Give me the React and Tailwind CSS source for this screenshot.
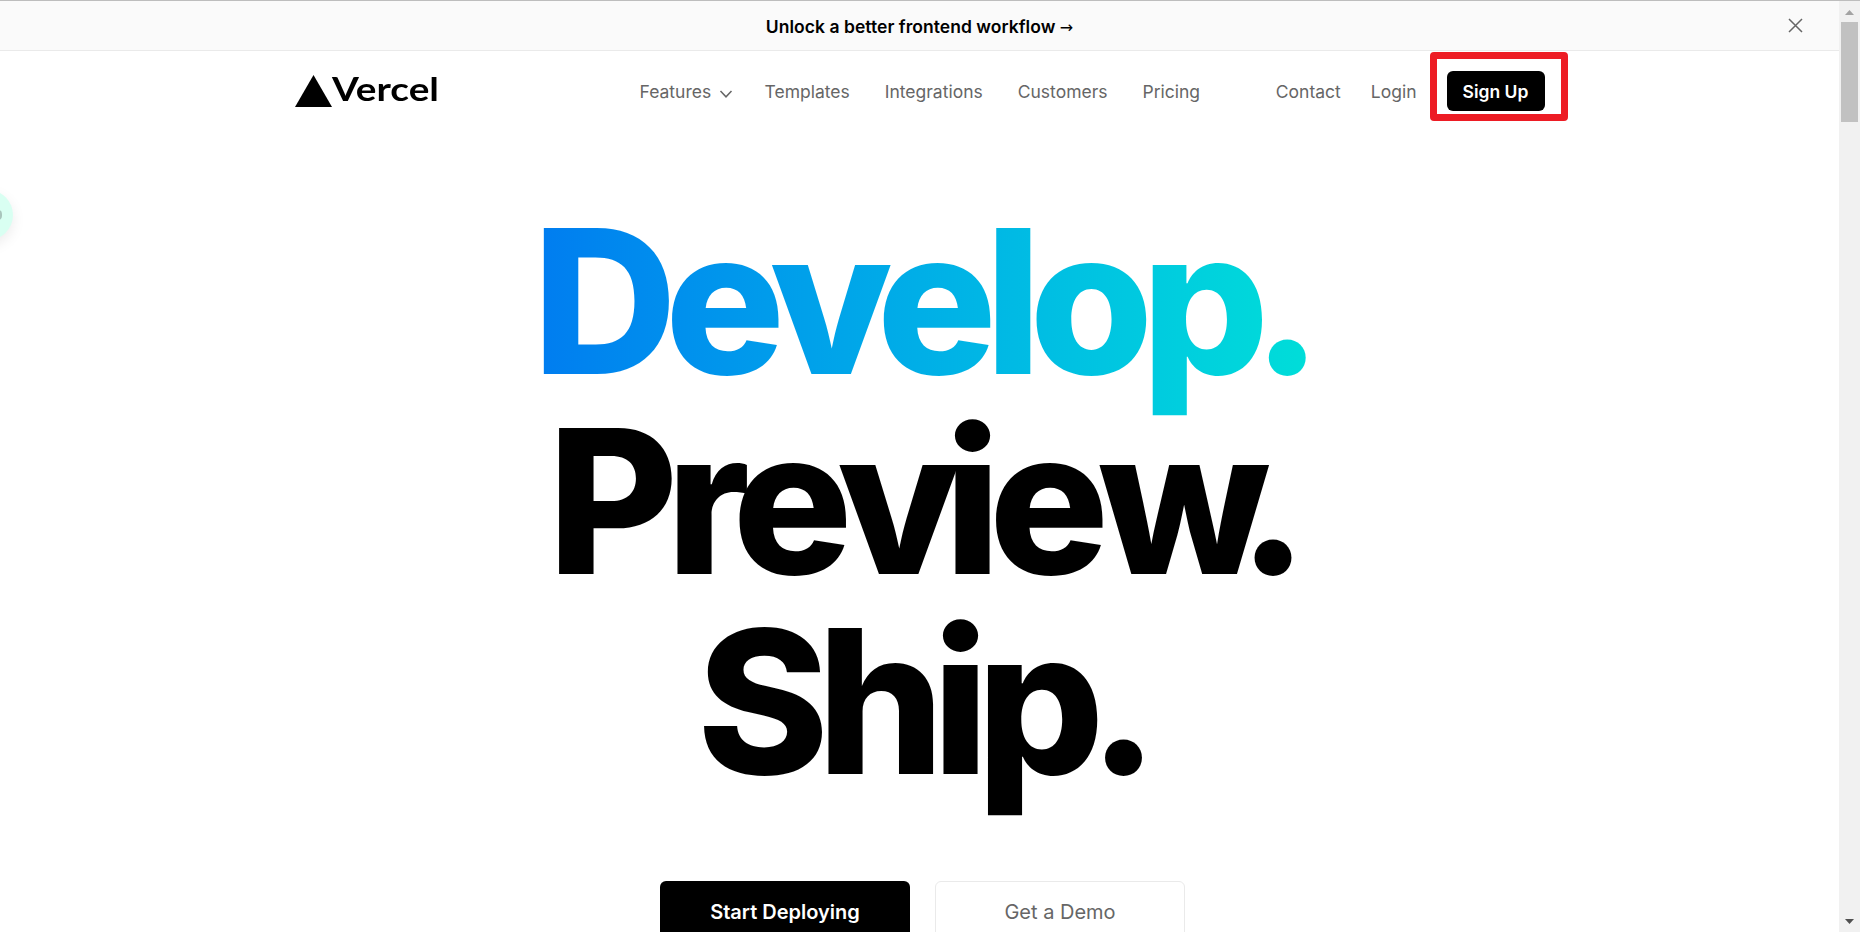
function Banner() {
  return (
    <div className="flex h-[51px] shrink-0 items-center border-t border-b border-t-[#bdbdbd] border-b-[#eaeaea] bg-[#fafafa]">
      <div className="w-[65px]" />
      <a className="flex-1 pt-[3px] text-center text-[17.5px] font-semibold leading-[26px] tracking-[0.04px] text-black">
        Unlock a better frontend workflow <span className="text-[16px] font-normal leading-[20px] tracking-normal font-[DejaVu_Sans,sans-serif]">→</span>
      </a>
      <div className="flex w-[65px] justify-center pr-[22px]">
        <svg width="15" height="15" viewBox="0 0 15 15" fill="none" stroke="#666" strokeWidth="1.5">
          <path d="M1 1l13 13M14 1L1 14" />
        </svg>
      </div>
    </div>
  );
}

function Logo() {
  return (
    <div className="flex h-8 w-[345px] items-start">
      <svg width="37" height="32" viewBox="0 0 37 32">
        <path d="M18.500 0L37 32H0z" fill="#000" />
      </svg>
      <span className="-mt-[2px] origin-left scale-x-[1.21] text-[32px] font-bold leading-[32px] text-black font-[Lato,sans-serif]">
        Vercel
      </span>
    </div>
  );
}

function Nav() {
  return (
    <header className="mx-auto flex h-[80px] w-[1250px] shrink-0 items-center text-[17.5px] leading-[26px] text-[#666]">
      <Logo />
      <nav className="flex gap-[35px] pt-[2px]">
        <a className="flex w-[90px] items-center gap-[8px]">
          Features
          <svg width="14" height="10" viewBox="0 0 14 10" fill="none" stroke="#666" strokeWidth="1.5" className="mt-[3px] shrink-0">
            <path d="M1.500 2L7 7.800L12.500 2" />
          </svg>
        </a>
        <a>Templates</a>
        <a>Integrations</a>
        <a>Customers</a>
        <a>Pricing</a>
      </nav>
      <div className="ml-auto flex items-center">
        <a className="mr-[30px] pt-[2px]">Contact</a>
        <a className="mr-[30px] pt-[2px]">Login</a>
        <span className="relative flex h-10 w-[98px] items-center justify-center rounded-[6px] bg-black pt-[2px] font-semibold text-white">
          Sign Up
          <span className="absolute -left-[17px] -top-[19px] h-[69px] w-[138px] rounded-[4px] border-[7px] border-[#ed1c24]" />
        </span>
      </div>
    </header>
  );
}

function Hero() {
  return (
    <main className="flex flex-col items-center">
      <h1 className="mt-[70px] flex flex-col items-center text-[200px] font-extrabold leading-[200px] tracking-[-0.06em] text-black">
        <span className="-mb-[50px] ml-[16px] bg-linear-to-r from-[#007cf0] to-[#00dfd8] bg-clip-text pb-[50px] pr-[12px] text-transparent">
          De<span className="mr-[-4px]">v</span>elop<span className="ml-[-5px]">.</span>
        </span>
        <span className="ml-[5px]">
          Pre<span className="mr-[-4px]">v</span>ie<span className="ml-[1px]">w</span><span className="ml-[-21px]">.</span>
        </span>
        <span className="ml-[5px]">
          Ship<span className="ml-[-4px]">.</span>
        </span>
      </h1>
      <div className="mt-[80px] flex gap-[25px] pl-[6px] text-[20px]">
        <a className="flex h-[62px] w-[250px] items-center justify-center rounded-[6px] bg-black font-semibold text-white">
          Start Deploying
        </a>
        <a className="flex h-[62px] w-[250px] items-center justify-center rounded-[6px] border border-[#eaeaea] bg-white text-[#666]">
          Get a Demo
        </a>
      </div>
    </main>
  );
}

function Scrollbar() {
  return (
    <div className="flex w-[21px] shrink-0 flex-col items-center border-t border-[#bdbdbd] bg-[#f1f1f1]">
      <svg width="9" height="5" viewBox="0 0 9 5" className="mt-[9px] shrink-0">
        <path d="M4.500 0L9 5H0z" fill="#a3a3a3" />
      </svg>
      <div className="mt-[7px] h-[100px] w-[17px] bg-[#c1c1c1]" />
      <svg width="9" height="5" viewBox="0 0 9 5" className="mb-[8px] mt-auto shrink-0">
        <path d="M4.500 5L9 0H0z" fill="#505050" />
      </svg>
    </div>
  );
}

export default function App() {
  return (
    <div className="relative flex h-[932px] w-[1860px] overflow-hidden bg-white font-[Inter,sans-serif]">
      <div className="flex h-full w-[1839px] flex-col overflow-hidden">
        <Banner />
        <Nav />
        <Hero />
      </div>
      <Scrollbar />
      <div className="absolute -left-[37px] top-[190px] flex h-[50px] w-[50px] items-center justify-end rounded-full bg-[#d9fff2] pr-[11px] shadow-[0_5px_14px_rgba(0,0,0,0.08)]">
        <span className="h-[10px] w-[8px] rounded-full border-2 border-[#a9c5bc]" />
      </div>
    </div>
  );
}
